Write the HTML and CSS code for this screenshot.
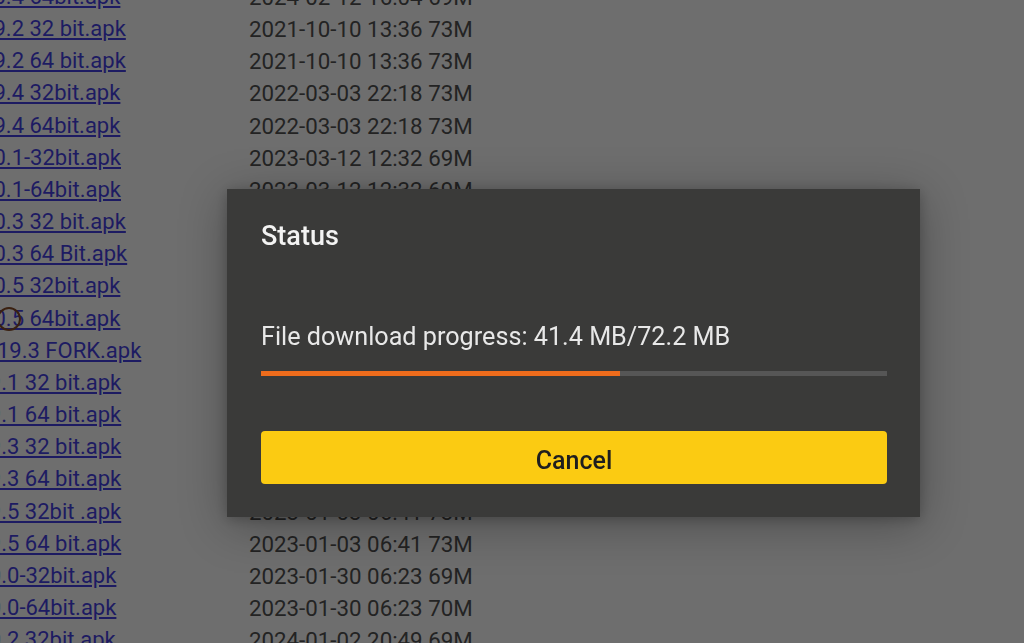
FILE: index.html
```html
<!DOCTYPE html>
<html lang="en">
<head>
<meta charset="utf-8">
<title>Downloader</title>
<link rel="stylesheet" href="styles.css">
</head>
<body>
<div class="listing">
  <div class="name a"><a href="#">20.4 64bit.apk</a></div><div class="meta">2024-02-12 16:04 69M</div>
  <div class="name a"><a href="#">19.2 32 bit.apk</a></div><div class="meta">2021-10-10 13:36 73M</div>
  <div class="name a"><a href="#">19.2 64 bit.apk</a></div><div class="meta">2021-10-10 13:36 73M</div>
  <div class="name a"><a href="#">19.4 32bit.apk</a></div><div class="meta">2022-03-03 22:18 73M</div>
  <div class="name a"><a href="#">19.4 64bit.apk</a></div><div class="meta">2022-03-03 22:18 73M</div>
  <div class="name a"><a href="#">20.1-32bit.apk</a></div><div class="meta">2023-03-12 12:32 69M</div>
  <div class="name a"><a href="#">20.1-64bit.apk</a></div><div class="meta">2023-03-12 12:32 69M</div>
  <div class="name a"><a href="#">20.3 32 bit.apk</a></div><div class="meta">2024-01-02 20:49 69M</div>
  <div class="name a"><a href="#">20.3 64 Bit.apk</a></div><div class="meta">2024-01-02 20:49 70M</div>
  <div class="name a"><a href="#">20.5 32bit.apk</a></div><div class="meta">2024-03-18 09:12 69M</div>
  <div class="name a"><a href="#">20.5 64bit.apk</a><span class="cursor"></span></div><div class="meta">2024-03-18 09:12 70M</div>
  <div class="name b"><a href="#">19.3 FORK.apk</a></div><div class="meta">2021-11-14 18:20 73M</div>
  <div class="name c"><a href="#">19.1 32 bit.apk</a></div><div class="meta">2021-06-20 11:05 73M</div>
  <div class="name c"><a href="#">19.1 64 bit.apk</a></div><div class="meta">2021-06-20 11:05 73M</div>
  <div class="name c"><a href="#">19.3 32 bit.apk</a></div><div class="meta">2021-11-14 18:20 73M</div>
  <div class="name c"><a href="#">19.3 64 bit.apk</a></div><div class="meta">2021-11-14 18:20 73M</div>
  <div class="name c"><a href="#">19.5 32bit .apk</a></div><div class="meta">2023-01-03 06:41 73M</div>
  <div class="name c"><a href="#">19.5 64 bit.apk</a></div><div class="meta">2023-01-03 06:41 73M</div>
  <div class="name c"><a href="#">20.0-32bit.apk</a></div><div class="meta">2023-01-30 06:23 69M</div>
  <div class="name c"><a href="#">20.0-64bit.apk</a></div><div class="meta">2023-01-30 06:23 70M</div>
  <div class="name c"><a href="#">20.2 32bit.apk</a></div><div class="meta">2024-01-02 20:49 69M</div>
  <div class="name c"><a href="#">20.2 64bit.apk</a></div><div class="meta">2024-01-02 20:49 70M</div>
</div>

<div class="dialog">
  <div class="title">Status</div>
  <div class="progress-text">File download progress: 41.4 MB/72.2 MB</div>
  <div class="bar"><div class="fill" style="width: 57.3%"></div></div>
  <button class="cancel">Cancel</button>
</div>
</body>
</html>
```

FILE: styles.css
```css
html, body {
  margin: 0;
  padding: 0;
  height: 100%;
  overflow: hidden;
}

body {
  background: #6e6e6e;
  font-family: Roboto, "Noto Sans", Arial, sans-serif;
  color: #222222;
}

.listing {
  display: grid;
  grid-template-columns: 249px auto;
  grid-auto-rows: 32.16px;
  margin-top: -19px;
  font-size: 22px;
  line-height: 32.16px;
}

.name {
  white-space: nowrap;
  position: relative;
}

.name a {
  color: #1d1b62;
  text-decoration: underline;
  text-underline-offset: 2px;
}

.name.a { text-indent: -18.9px; }
.name.b { text-indent: -3px; }
.name.c { text-indent: -23.5px; }

.meta {
  white-space: nowrap;
  color: #232323;
  font-size: 22.3px;
}

.cursor {
  position: absolute;
  left: -3px;
  top: 4px;
  width: 24px;
  height: 24px;
  border: 2px solid #3a2010;
  border-radius: 50%;
  box-sizing: border-box;
}

.dialog {
  position: fixed;
  left: 227px;
  top: 189px;
  width: 693px;
  height: 328px;
  box-sizing: border-box;
  padding: 32px 33px 32px 34px;
  background: #3a3a39;
  box-shadow: 0 8px 44px rgba(0, 0, 0, 0.3), 0 2px 12px rgba(0, 0, 0, 0.22);
  display: flex;
  flex-direction: column;
}

.title {
  font-size: 27px;
  line-height: 30px;
  font-weight: 500;
  color: #f3f3f3;
}

.progress-text {
  margin-top: 73px;
  font-size: 25.2px;
  line-height: 26px;
  color: #e8e8e8;
  white-space: nowrap;
}

.bar {
  margin-top: 21px;
  height: 5px;
  background: #565656;
}

.fill {
  height: 100%;
  background: #ee6c1c;
}

.cancel {
  margin-top: 55px;
  height: 53px;
  border: none;
  border-radius: 4px;
  background: #fbcb12;
  color: #1e1e1e;
  font-family: Roboto, "Noto Sans", Arial, sans-serif;
  font-size: 25px;
  font-weight: 500;
  padding: 5px 0 0;
}
```
